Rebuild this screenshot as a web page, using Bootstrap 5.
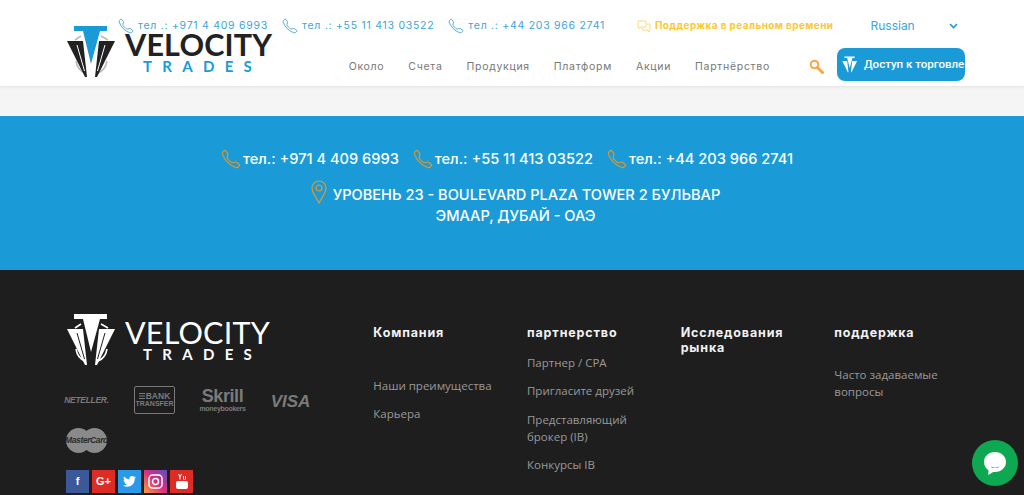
<!DOCTYPE html>
<html lang="ru">
<head>
  <meta charset="UTF-8">
  <meta name="viewport" content="width=device-width, initial-scale=1.0">
  <title>Velocity Trades</title>
  <link href="https://cdn.jsdelivr.net/npm/bootstrap@5.3.0/dist/css/bootstrap.min.css" rel="stylesheet">
  <style>
    html, body { height: 495px; overflow: hidden; }
    body { font-family: "Open Sans", sans-serif; background: #fff; }
    .site-wrap { max-width: 922px; margin: 0 auto; padding: 0 15px; }

    /* header */
    .site-head { height: 86px; background: #fff; position: relative; box-shadow: 0 1px 3px rgba(0,0,0,.08); }
    .head-top { height: 34px; padding: 17px 0 0 52px; font-family: Inter, sans-serif; }
    .head-phone { color: #3ea4da; font-size: 10.5px; letter-spacing: .73px; line-height: 17px; white-space: nowrap; }
    .head-phone + .head-phone { margin-left: 14px; }
    .head-phone svg { width: 16px; height: 16px; margin-right: 4px; }
    .head-live { color: #ffc72c; font-size: 10px; font-weight: 700; letter-spacing: .4px; white-space: nowrap; }
    .head-lang { color: #3ea4da; font-size: 12px; width: 94px; margin-left: 37px; }
    .head-low { height: 52px; }
    .logo-mark { width: 52px; height: 52px; margin-top: -8px; flex: none; --m-top: #1a9bd7; --m-side: #222; --m-arc: #bbb; --m-cut: #fff; }
    .logo-word { margin-left: 7px; margin-top: -2px; font-family: Lato, sans-serif; }
    .logo-big { font-size: 30.5px; line-height: 24px; font-weight: 700; color: #222; letter-spacing: .2px; white-space: nowrap; }
    .logo-sub { font-size: 15px; line-height: 16px; font-weight: 700; color: #1a9bd7; letter-spacing: 10.3px; margin: 2px 0 0 18px; white-space: nowrap; }
    .head-nav { font-family: Inter, sans-serif; font-size: 10.5px; letter-spacing: .7px; color: #777; gap: 24px; margin-top: 25px; white-space: nowrap; }
    .head-search { width: 15px; height: 15px; margin: 25px 13px 0 39px; }
    .trade-btn { height: 33px; width: 128px; margin: 14px -7px 0 0; border-radius: 8px; background: #1a9bd7; color: #fff; font-family: Roboto, sans-serif; font-weight: 500; font-size: 11.5px; white-space: nowrap; }
    .trade-btn svg { width: 16px; height: 17px; margin: 0 6px 0 5px; }

    .gray-strip { height: 30px; background: #f5f5f5; }

    /* blue band */
    .contact-band { height: 154px; background: #1a9bd7; color: #fff; font-family: Inter, sans-serif; font-weight: 500; padding-top: 32px; }
    .band-phones { gap: 14px; font-size: 14.6px; line-height: 22px; white-space: nowrap; padding-right: 10px; }
    .band-phones svg { width: 20px; height: 20px; margin-right: 2px; color: #e0982c; }
    .band-addr { font-size: 14.6px; line-height: 21px; margin-top: 10px; padding-left: 7px; }
    .band-addr svg { width: 16px; height: 24px; margin: 0 6px 0 0; vertical-align: -4px; }

    /* footer */
    .site-foot { height: 225px; background: #1e1e1e; padding-top: 44px; }
    .foot-row { --bs-gutter-x: 30px; }
    .foot-logo .logo-big { color: #fff; font-weight: 400; }
    .foot-logo .logo-sub { color: #fff; }
    .foot-logo .logo-mark { margin-top: 0; --m-top: #fff; --m-side: #fff; --m-arc: #fff; --m-cut: #1e1e1e; }
    .foot-logo .logo-word { margin-top: 6px; }
    .foot-head { font-family: Inter, sans-serif; font-size: 12.5px; line-height: 14.5px; font-weight: 700; letter-spacing: .85px; color: #f2f2f2; margin: 12px 0 0; }
    .foot-links { font-size: 11.5px; line-height: 17px; list-style: none; padding: 0; margin: 0; color: #999; }
    .foot-links li { margin-bottom: 11.5px; }
    .links-company { margin-top: 36px; }
    .links-partner { margin-top: 13px; }
    .links-support { margin-top: 25px; }

    .pay-grid { display: flex; flex-wrap: wrap; column-gap: 27px; row-gap: 13px; width: 260px; margin-top: 20px; color: #7a7a7a; height: 67px; }
    .pay-item { width: 41px; height: 28px; display: flex; flex-direction: column; align-items: center; justify-content: center; font-family: "Liberation Sans", sans-serif; font-weight: 700; white-space: nowrap; }
    .pay-net { font-size: 8.5px; font-style: italic; letter-spacing: -.3px; }
    .pay-bank { border: 1px solid #7a7a7a; border-radius: 2px; font-size: 7px; line-height: 8px; }
    .pay-bank b { font-size: 8.5px; display: flex; align-items: center; gap: 1px; }
    .pay-skrill { font-size: 18px; line-height: 17px; letter-spacing: -.4px; }
    .pay-skrill span { font-size: 7px; line-height: 7px; letter-spacing: -.3px; }
    .pay-visa { font-size: 17px; font-style: italic; padding-top: 4px; }
    .pay-master { position: relative; height: 25px; }
    .pay-master i { position: absolute; top: 0; width: 25px; height: 25px; border-radius: 50%; background: #8a8a8a; }
    .pay-master i:first-child { left: 0; }
    .pay-master i:nth-child(2) { right: 0; }
    .pay-master span { position: relative; color: #2a2a2a; font-size: 8.5px; font-style: italic; letter-spacing: -.4px; }

    .social-row { gap: 3px; margin-top: 17px; }
    .social-box { width: 23px; height: 23px; color: #fff; font-family: "Liberation Sans", sans-serif; font-weight: 700; font-size: 11px; }
    .soc-fb { background: #3b5998; }
    .soc-gp, .soc-yt { background: #dd2c26; }
    .soc-tw { background: #2a9ae8; }
    .soc-ig { background: linear-gradient(45deg, #f9a13a, #d92e7f 50%, #5b4fc0); }

    .chat-fab { position: fixed; right: 6px; bottom: 9px; width: 46px; height: 46px; border-radius: 50%; background: #0da851; }
  </style>
</head>
<body>
  <svg width="0" height="0" class="d-block">
    <symbol id="ico-phone" viewBox="0 0 16 16">
      <path fill="none" stroke="currentColor" stroke-width=".9" d="M3.654 1.328a.678.678 0 0 0-1.015-.063L1.605 2.3c-.483.484-.661 1.169-.45 1.77a17.568 17.568 0 0 0 4.168 6.608 17.569 17.569 0 0 0 6.608 4.168c.601.211 1.286.033 1.77-.45l1.034-1.034a.678.678 0 0 0-.063-1.015l-2.307-1.794a.678.678 0 0 0-.58-.122l-2.19.547a1.745 1.745 0 0 1-1.657-.459L5.482 8.062a1.745 1.745 0 0 1-.46-1.657l.548-2.19a.678.678 0 0 0-.122-.58L3.654 1.328z"/>
    </symbol>
    <symbol id="ico-logo" viewBox="66 27 52 52">
      <path fill="none" stroke="var(--m-arc)" stroke-width="1.6" d="M81 37 75 41M101 37 108 41M76 62C77 68 80 72 85 74M107 62C106 68 103 72 98 74"/>
      <path fill="var(--m-top)" d="M74 27H107V32H100L91 65 83 32H74z"/>
      <path fill="var(--m-side)" d="M67 42H83L87 78H85zM115 42H99L95 78H97z"/>
      <path fill="none" stroke="var(--m-cut)" stroke-width="1" d="M77 46 84.500 72M105 46 97.500 72"/>
    </symbol>
  </svg>

  <header class="site-head">
    <div class="site-wrap">
      <div class="head-top d-flex align-items-center">
        <span class="head-phone d-flex align-items-center"><svg><use href="#ico-phone"/></svg>тел .: +971 4 409 6993</span>
        <span class="head-phone d-flex align-items-center"><svg><use href="#ico-phone"/></svg>тел .: +55 11 413 03522</span>
        <span class="head-phone d-flex align-items-center"><svg><use href="#ico-phone"/></svg>тел .: +44 203 966 2741</span>
        <span class="head-live d-flex align-items-center ms-4 ps-2">
          <svg width="14" height="14" viewBox="0 0 14 14" class="me-1" fill="none" stroke="#ffd873"><path d="M1 2H9V8H4L2 10V8H1zM10 5H13V11H12V13L10 11H5V9"/></svg>
          Поддержка в реальном времени
        </span>
        <span class="head-lang d-flex align-items-center justify-content-between">Russian
          <svg width="9" height="6" viewBox="0 0 9 6" fill="none" stroke="#1a9bd7" stroke-width="1.6"><path d="M1 1 4.500 4.500 8 1"/></svg>
        </span>
      </div>
      <div class="head-low d-flex">
        <div class="d-flex me-auto">
          <svg class="logo-mark"><use href="#ico-logo"/></svg>
          <div class="logo-word">
            <div class="logo-big">VELOCITY</div>
            <div class="logo-sub">TRADES</div>
          </div>
        </div>
        <nav class="head-nav d-flex">
          <span>Около</span><span>Счета</span><span>Продукция</span><span>Платформ</span><span>Акции</span><span>Партнёрство</span>
        </nav>
        <svg class="head-search" viewBox="0 0 15 15" fill="none" stroke="#f7a74a"><circle cx="5.500" cy="5.500" r="3.800" stroke-width="2"/><path d="M8.500 8.500 13.500 13.500" stroke-width="3" stroke-linecap="round"/></svg>
        <a class="trade-btn d-flex align-items-center text-decoration-none">
          <svg viewBox="66 27 52 52"><path fill="#fff" d="M74 27H107V32H100L91 65 83 32H74zM67 42H83L87 78H85zM115 42H99L95 78H97z"/></svg>
          Доступ к торговле
        </a>
      </div>
    </div>
  </header>

  <div class="gray-strip"></div>

  <section class="contact-band text-center">
    <div class="band-phones d-flex justify-content-center">
      <span class="d-flex align-items-center"><svg><use href="#ico-phone"/></svg>тел.: +971 4 409 6993</span>
      <span class="d-flex align-items-center"><svg><use href="#ico-phone"/></svg>тел.: +55 11 413 03522</span>
      <span class="d-flex align-items-center"><svg><use href="#ico-phone"/></svg>тел.: +44 203 966 2741</span>
    </div>
    <div class="band-addr">
      <svg viewBox="0 0 16 24" fill="none" stroke="#e0982c" stroke-width="1.2"><path d="M8 23C5 17 1 13 1 8a7 7 0 0 1 14 0C15 13 11 17 8 23z"/><circle cx="8" cy="8" r="3"/></svg>УРОВЕНЬ 23 - BOULEVARD PLAZA TOWER 2 БУЛЬВАР<br>ЭМААР, ДУБАЙ - ОАЭ
    </div>
  </section>

  <footer class="site-foot">
    <div class="site-wrap">
      <div class="row foot-row">
        <div class="col-4">
          <div class="foot-logo d-flex">
            <svg class="logo-mark"><use href="#ico-logo"/></svg>
            <div class="logo-word">
              <div class="logo-big">VELOCITY</div>
              <div class="logo-sub">TRADES</div>
            </div>
          </div>
          <div class="pay-grid">
            <div class="pay-item pay-net">NETELLER.</div>
            <div class="pay-item pay-bank"><b><svg width="6" height="6" viewBox="0 0 6 6" stroke="#7a7a7a"><path d="M0 .5H6M0 3H6M0 5.500H6"/></svg>BANK</b>TRANSFER</div>
            <div class="pay-item pay-skrill">Skrill<span>moneybookers</span></div>
            <div class="pay-item pay-visa">VISA</div>
            <div class="pay-item pay-master"><i></i><i></i><span>MasterCard</span></div>
          </div>
          <div class="social-row d-flex">
            <div class="social-box soc-fb d-flex align-items-center justify-content-center">f</div>
            <div class="social-box soc-gp d-flex align-items-center justify-content-center">G+</div>
            <div class="social-box soc-tw d-flex align-items-center justify-content-center">
              <svg width="13" height="11" viewBox="0 0 13 11" fill="#fff"><path d="M13 1.300c-.5.2-1 .4-1.500.4.5-.3 1-.8 1.200-1.400-.5.3-1.100.5-1.700.6A2.700 2.700 0 0 0 6.400 3.400C4.200 3.300 2.300 2.200 1 .6.300 1.800.6 3.400 1.800 4.200c-.4 0-.8-.1-1.200-.3 0 1.300.9 2.400 2.100 2.600-.4.100-.8.100-1.200 0 .3 1.100 1.300 1.800 2.500 1.900A5.400 5.400 0 0 1 0 9.500 7.600 7.600 0 0 0 11.700 2.700c.5-.4 1-.9 1.300-1.400z"/></svg>
            </div>
            <div class="social-box soc-ig d-flex align-items-center justify-content-center">
              <svg width="15" height="15" viewBox="0 0 15 15" fill="none" stroke="#fff" stroke-width="1.500"><rect x="1" y="1" width="13" height="13" rx="3.500"/><circle cx="7.500" cy="7.500" r="3"/></svg>
            </div>
            <div class="social-box soc-yt d-flex align-items-center justify-content-center">
              <svg width="12" height="15" viewBox="0 0 12 15" fill="#fff"><rect x="0" y="7" width="12" height="8" rx="2"/><path d="M2 0 3.500 3V5.500H4.500V3L6 0H5L4 2 3 0zM7 2H8V5H9V2H10V5.500H7z"/></svg>
            </div>
          </div>
        </div>
        <div class="col-2">
          <h6 class="foot-head">Компания</h6>
          <ul class="foot-links links-company">
            <li>Наши преимущества</li>
            <li>Карьера</li>
          </ul>
        </div>
        <div class="col-2">
          <h6 class="foot-head">партнерство</h6>
          <ul class="foot-links links-partner">
            <li>Партнер / CPA</li>
            <li>Пригласите друзей</li>
            <li>Представляющий брокер (IB)</li>
            <li>Конкурсы IB</li>
          </ul>
        </div>
        <div class="col-2">
          <h6 class="foot-head">Исследования рынка</h6>
        </div>
        <div class="col-2">
          <h6 class="foot-head">поддержка</h6>
          <ul class="foot-links links-support">
            <li>Часто задаваемые вопросы</li>
          </ul>
        </div>
      </div>
    </div>
  </footer>

  <div class="chat-fab d-flex align-items-center justify-content-center">
    <svg width="24" height="25" viewBox="0 0 24 25"><path fill="#fff" d="M12 1C5.500 1 1 5.500 1 11c0 3.500 1.800 6.400 4.500 8.200L5.300 24l5-3.100c.5.100 1.100.1 1.700.1 6.500 0 11-4.500 11-10S18.500 1 12 1z"/><path fill="#0da851" d="M8 15.500c2.500 1.500 5.500 1.500 8 0-.3 2-7.700 2-8 0z"/></svg>
  </div>

  <script src="https://cdn.jsdelivr.net/npm/bootstrap@5.3.0/dist/js/bootstrap.bundle.min.js"></script>
</body>
</html>
